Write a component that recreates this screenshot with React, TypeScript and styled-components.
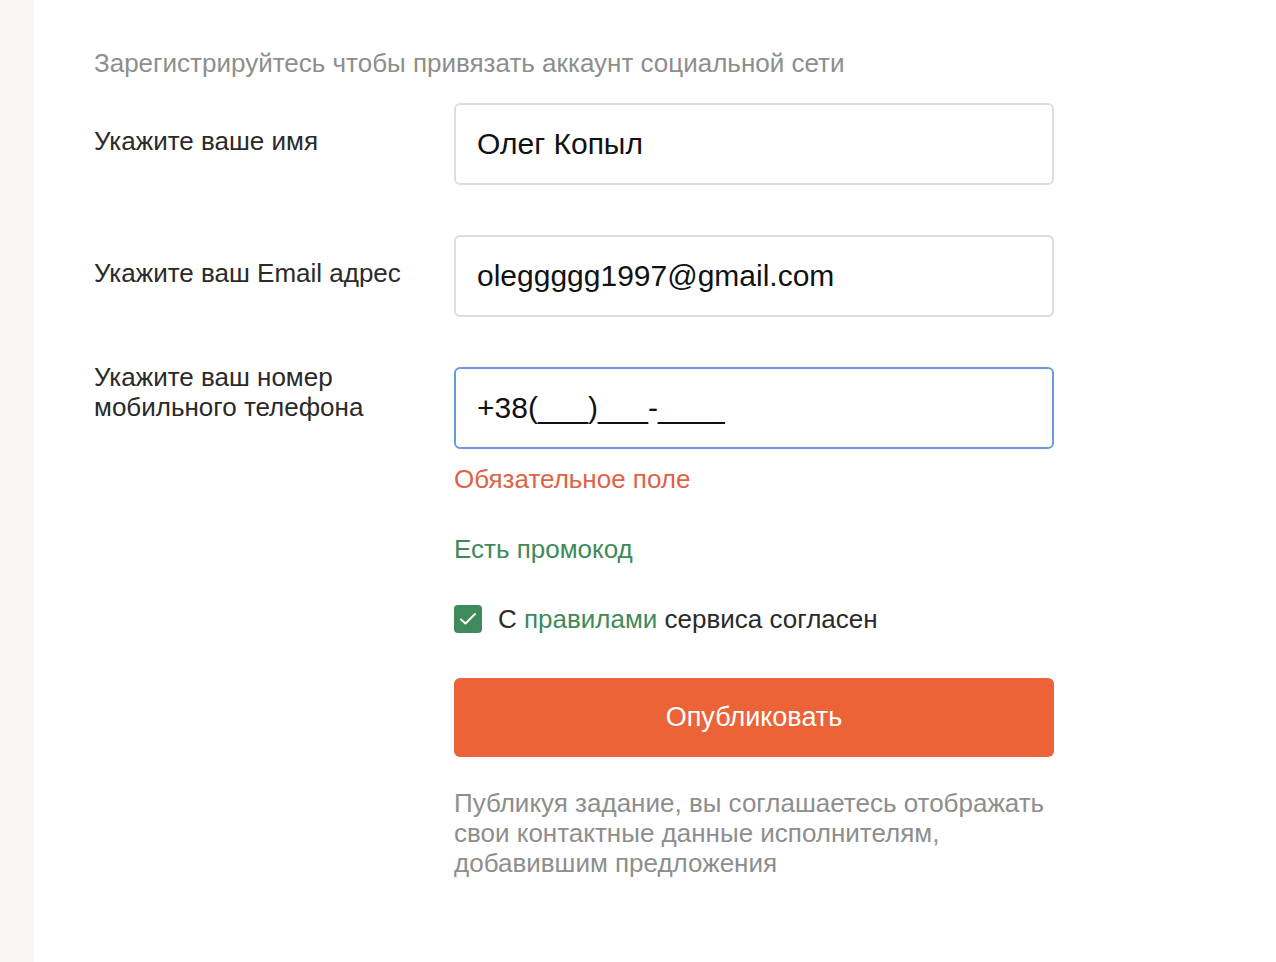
import React from "react";
import styled, { createGlobalStyle } from "styled-components";

const GlobalStyle = createGlobalStyle`
  html, body { margin: 0; padding: 0; background: #ffffff; }
  body { font-family: "Liberation Sans", Arial, Helvetica, sans-serif; }
  * { box-sizing: border-box; }
`;

const Page = styled.div`
  display: flex;
  min-height: 962px;
`;

const SideStrip = styled.div`
  width: 34px;
  flex: 0 0 34px;
  background: #f8f7f5;
`;

const Main = styled.main`
  flex: 1;
  padding: 48px 0 0 60px;
`;

const Title = styled.div`
  font-size: 26px;
  line-height: 30px;
  color: #8e8e8e;
  margin-bottom: 25px;
`;

const Form = styled.div`
  display: grid;
  grid-template-columns: 360px 600px;
  row-gap: 50px;
`;

const Label = styled.div<{ $align: "center" | "start" }>`
  font-size: 26px;
  line-height: 30px;
  color: #2a2a2a;
  align-self: ${(p) => (p.$align === "center" ? "center" : "start")};
  margin-top: ${(p) => (p.$align === "center" ? "-6px" : "-5px")};
`;

const Input = styled.div<{ $focused?: boolean }>`
  height: 82px;
  border: ${(p) => (p.$focused ? "2px solid #6b9ad9" : "2px solid #dddddd")};
  border-radius: 6px;
  padding-left: 21px;
  display: flex;
  align-items: center;
  font-size: 30px;
  color: #111111;
  background: #fff;
`;

const Controls = styled.div`
  grid-column: 2;
  margin-top: -50px;
  display: flex;
  flex-direction: column;
`;

const ErrorText = styled.div`
  margin-top: 15px;
  font-size: 26px;
  line-height: 30px;
  color: #de6346;
`;

const PromoLink = styled.a`
  margin-top: 40px;
  font-size: 26px;
  line-height: 30px;
  color: #3f8a5a;
  text-decoration: none;
`;

const AgreeRow = styled.label`
  margin-top: 40px;
  display: flex;
  align-items: center;
  gap: 16px;
  font-size: 26px;
  line-height: 30px;
  color: #2a2a2a;
`;

const CheckBox = styled.span`
  width: 28px;
  height: 28px;
  border-radius: 4px;
  background: #3d8a5a;
  display: flex;
  align-items: center;
  justify-content: center;
  flex: 0 0 28px;
`;

const GreenText = styled.span`
  color: #3f8a5a;
`;

const SubmitButton = styled.button`
  margin-top: 44px;
  height: 79px;
  width: 100%;
  border: none;
  border-radius: 6px;
  background: #ec6337;
  color: #ffffff;
  font-family: inherit;
  font-size: 27px;
  cursor: pointer;
`;

const Note = styled.p`
  margin: 31px 0 0 0;
  font-size: 26px;
  line-height: 30px;
  color: #8e8e8e;
  width: 600px;
`;

export default function App() {
  return (
    <>
      <GlobalStyle />
      <Page>
        <SideStrip />
        <Main>
          <Title>Зарегистрируйтесь чтобы привязать аккаунт социальной сети</Title>
          <Form>
            <Label $align="center">Укажите ваше имя</Label>
            <Input>Олег Копыл</Input>
            <Label $align="center">Укажите ваш Email адрес</Label>
            <Input>oleggggg1997@gmail.com</Input>
            <Label $align="start">
              Укажите ваш номер
              <br />
              мобильного телефона
            </Label>
            <Input $focused>+38(___)___-____</Input>
            <Controls>
              <ErrorText>Обязательное поле</ErrorText>
              <PromoLink href="#">Есть промокод</PromoLink>
              <AgreeRow>
                <CheckBox>
                  <svg width="18" height="18" viewBox="0 0 18 18" fill="none">
                    <path d="M2 9.5 L6.5 13.5 L16 4" stroke="#fff" strokeWidth="2" strokeLinecap="round" strokeLinejoin="round" />
                  </svg>
                </CheckBox>
                <span>
                  С <GreenText>правилами</GreenText> сервиса согласен
                </span>
              </AgreeRow>
              <SubmitButton>Опубликовать</SubmitButton>
              <Note>
                Публикуя задание, вы соглашаетесь отображать свои контактные данные исполнителям,
                добавившим предложения
              </Note>
            </Controls>
          </Form>
        </Main>
      </Page>
    </>
  );
}
